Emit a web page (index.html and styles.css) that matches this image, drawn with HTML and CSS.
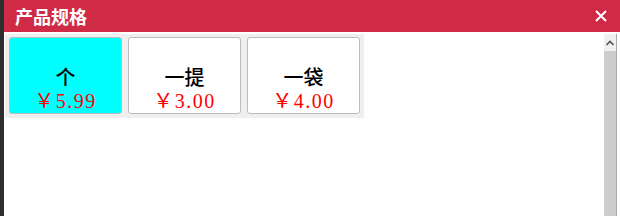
FILE: index.html
```html
<!DOCTYPE html>
<html lang="zh-CN">
<head>
    <meta charset="UTF-8">
    <title>产品规格</title>
    <link rel="stylesheet" href="styles.css">
</head>
<body>
    <div class="side-strip"></div>
    <div class="dialog">
        <header class="dialog-header">
            <h1 class="dialog-title">产品规格</h1>
            <svg class="close-icon" width="12" height="12" viewBox="0 0 12 12">
                <path d="M1 1 L11 11 M11 1 L1 11" stroke="#fff" stroke-width="2" fill="none"/>
            </svg>
        </header>
        <div class="dialog-body">
            <div class="spec-area">
                <div class="spec-list">
                    <div class="spec-card selected">
                        <div class="spec-name">个</div>
                        <div class="spec-price">￥5.99</div>
                    </div>
                    <div class="spec-card">
                        <div class="spec-name">一提</div>
                        <div class="spec-price">￥3.00</div>
                    </div>
                    <div class="spec-card">
                        <div class="spec-name">一袋</div>
                        <div class="spec-price">￥4.00</div>
                    </div>
                </div>
            </div>
            <div class="scrollbar">
                <div class="scroll-up">
                    <svg width="8" height="6" viewBox="0 0 8 6">
                        <path d="M0.5 5 L4 1.5 L7.5 5" stroke="#555" stroke-width="1.6" fill="none"/>
                    </svg>
                </div>
                <div class="scroll-thumb"></div>
            </div>
            <div class="right-edge"></div>
        </div>
    </div>
</body>
</html>
```

FILE: styles.css
```css
body {
    margin: 0;
    padding: 0;
    display: flex;
    height: 216px;
    overflow: hidden;
    background-color: #fff;
    font-family: "Noto Sans CJK SC", sans-serif;
}
.side-strip {
    width: 4px;
    background-color: #2e2e2e;
}
.dialog {
    flex: 1;
    display: flex;
    flex-direction: column;
}
.dialog-header {
    height: 32px;
    background-color: #d02b46;
    display: flex;
    align-items: center;
    justify-content: space-between;
    padding: 0 13px 0 11px;
}
.dialog-title {
    margin: 0;
    color: #fff;
    font-size: 18px;
    font-weight: bold;
    line-height: 32px;
}
.close-icon {
    display: block;
}
.dialog-body {
    flex: 1;
    display: flex;
    padding-top: 2px;
}
.spec-area {
    flex: 1;
}
.spec-list {
    display: inline-flex;
    background-color: #efefef;
    padding: 0 1px 1px 1px;
    margin-left: 1px;
}
.spec-card {
    width: 111px;
    height: 75px;
    margin: 3px;
    border: 1px solid #bcbcbc;
    border-radius: 3px;
    background-color: #fff;
    display: flex;
    flex-direction: column;
    align-items: center;
    justify-content: flex-end;
}
.spec-card.selected {
    background-color: #00ffff;
}
.spec-name {
    font-size: 20px;
    line-height: 24px;
    color: #000;
    font-weight: 500;
}
.spec-price {
    font-family: "Liberation Serif", "Noto Sans CJK SC", serif;
    font-size: 20px;
    line-height: 24px;
    color: #ff0000;
    letter-spacing: 1.5px;
}
.scrollbar {
    width: 12px;
    display: flex;
    flex-direction: column;
    background-color: #cdcdcd;
}
.scroll-up {
    height: 17px;
    background-color: #f0f0f0;
    display: flex;
    align-items: center;
    justify-content: center;
}
.scroll-thumb {
    flex: 1;
    background-color: #cdcdcd;
}
.right-edge {
    width: 4px;
    border-left: 1px solid #a9a9a9;
    box-sizing: border-box;
    background-color: #fff;
}
```
